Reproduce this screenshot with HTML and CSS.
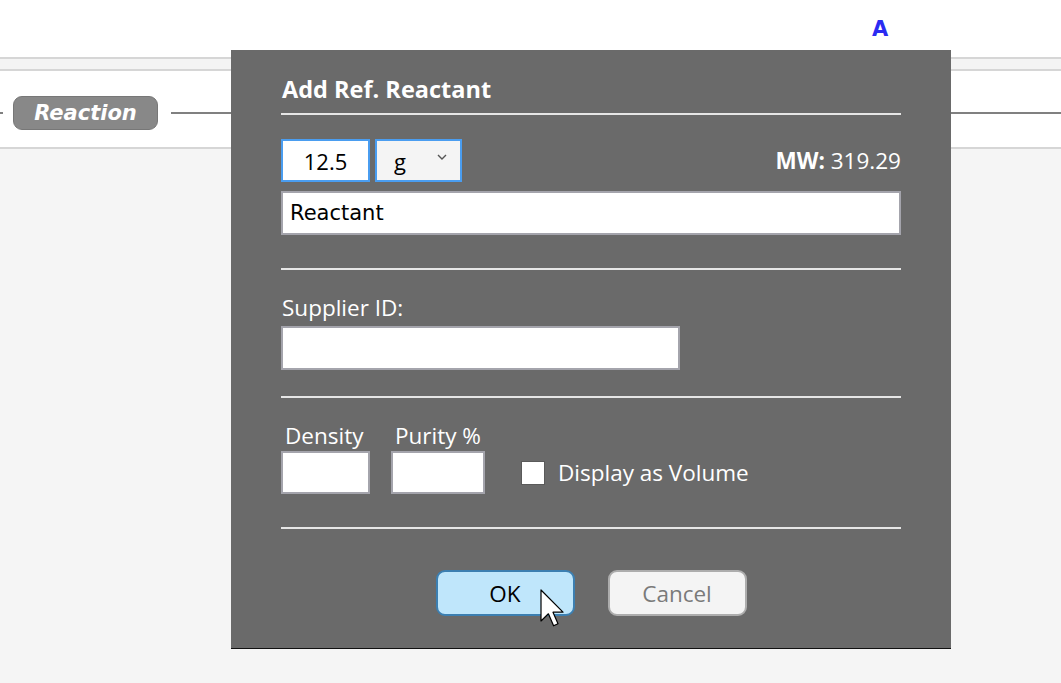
FILE: index.html
```html
<!DOCTYPE html>
<html lang="en">
<head>
    <meta charset="UTF-8">
    <title>Add Ref. Reactant</title>
    <link rel="stylesheet" href="styles.css">
</head>
<body>

    <div class="topbar">
        <span class="mark">A</span>
    </div>
    <div class="band"></div>
    <div class="flow">
        <span class="stub"></span>
        <span class="pill">Reaction</span>
        <span class="wire"></span>
    </div>
    <div class="rest"></div>

    <div class="dialog">
        <h2 class="title">Add Ref. Reactant</h2>
        <hr class="rule rule-title">

        <div class="amount-row">
            <input class="field amount" type="text" value="12.5">
            <div class="unit-wrap">
                <select class="field unit">
                    <option>g</option>
                    <option>mg</option>
                    <option>kg</option>
                </select>
                <svg class="chevron" width="10" height="6" viewBox="0 0 10 6">
                    <path d="M1 1 L5 5 L9 1" fill="none" stroke="#555" stroke-width="1.4"/>
                </svg>
            </div>
            <div class="mw"><b>MW:</b> 319.29</div>
        </div>
        <input class="field name" type="text" value="Reactant">

        <hr class="rule rule-name">

        <label class="label supplier-label">Supplier ID:</label>
        <input class="field supplier" type="text">

        <hr class="rule rule-supplier">

        <div class="props-row">
            <div class="prop">
                <label class="label prop-label">Density</label>
                <input class="field density" type="text">
            </div>
            <div class="prop">
                <label class="label prop-label">Purity %</label>
                <input class="field purity" type="text">
            </div>
            <label class="check">
                <span class="box"></span>
                Display as Volume
            </label>
        </div>

        <hr class="rule rule-props">

        <div class="buttons">
            <button class="btn btn-ok">OK</button>
            <button class="btn btn-cancel">Cancel</button>
        </div>

        <svg class="cursor" width="26" height="38" viewBox="0 0 13 19">
            <path d="M0.5 0.5 L0.5 16 L4.2 12.4 L6.8 18.4 L9 17.4 L6.5 11.6 L11.5 11.6 Z" fill="#fff" stroke="#000" stroke-width="0.6" stroke-linejoin="round"/>
        </svg>
    </div>

</body>
</html>
```

FILE: styles.css
```css
body {
    margin: 0;
    padding: 0;
    font-family: "Open Sans", "Noto Sans", sans-serif;
    background-color: #f5f5f5;
    height: 683px;
    overflow: hidden;
}

.topbar {
    height: 57px;
    background-color: #fff;
    padding-left: 872px;
    box-sizing: border-box;
    padding-top: 17px;
}

.mark {
    font-family: "DejaVu Sans", sans-serif;
    font-weight: bold;
    font-size: 21px;
    color: #2b2bf2;
}

.band {
    height: 10px;
    background-color: #f4f4f4;
    border-top: 2px solid #d6d6d6;
    border-bottom: 2px solid #d6d6d6;
}

.flow {
    height: 78px;
    box-sizing: border-box;
    padding-top: 7px;
    background-color: #fff;
    border-bottom: 2px solid #d6d6d6;
    display: flex;
    align-items: center;
}

.stub {
    width: 3px;
    height: 2px;
    background-color: #808080;
    margin-right: 10px;
}

.pill {
    width: 143px;
    height: 32px;
    line-height: 32px;
    text-align: center;
    background-color: #888;
    border: 1px solid #777;
    border-radius: 9px;
    color: #fff;
    font-family: "DejaVu Sans", sans-serif;
    font-style: italic;
    font-weight: bold;
    font-size: 21px;
    margin-right: 13px;
}

.wire {
    flex: 1;
    height: 2px;
    background-color: #808080;
}

.rest {
    background-color: #f5f5f5;
}

/* Dialog */
.dialog {
    position: absolute;
    left: 231px;
    top: 50px;
    width: 720px;
    height: 599px;
    box-sizing: border-box;
    padding: 24px 50px 0 50px;
    background-color: #6a6a6a;
    border-bottom: 1px solid #111;
    color: #fff;
}

.title {
    margin: 0;
    height: 30px;
    line-height: 30px;
    font-size: 23.5px;
    font-weight: bold;
    padding-left: 1px;
}

.rule {
    border: none;
    height: 2px;
    margin: 0;
    background-color: #e6e6e6;
}

.rule-title { margin-top: 9px; }
.rule-name { margin-top: 33px; }
.rule-supplier { margin-top: 26px; }
.rule-props { margin-top: 33px; }

.field {
    box-sizing: border-box;
    margin: 0;
    background-color: #fff;
    border: 2px solid #a4a4ac;
    font-family: "Open Sans", "Noto Sans", sans-serif;
    font-size: 22px;
    color: #000;
    outline: none;
}

.amount-row {
    display: flex;
    align-items: center;
    margin-top: 24px;
    height: 43px;
}

.amount {
    width: 89px;
    height: 43px;
    text-align: center;
    border-color: #4a9df0;
    padding: 0;
}

.unit-wrap {
    position: relative;
    margin-left: 5px;
}

.unit {
    width: 87px;
    height: 43px;
    border-color: #4a9df0;
    background-color: #f4f4f4;
    appearance: none;
    -webkit-appearance: none;
    padding: 0 0 0 17px;
    border-radius: 0;
}

.chevron {
    position: absolute;
    left: 62px;
    top: 15px;
}

.mw {
    margin-left: auto;
    font-size: 22.5px;
    margin-top: -1px;
}

.name {
    display: block;
    width: 620px;
    height: 44px;
    margin-top: 9px;
    padding: 0 7px;
    font-family: "DejaVu Sans", sans-serif;
    font-size: 21px;
}

.label {
    display: block;
    font-size: 22.5px;
    line-height: 26px;
}

.supplier-label {
    margin-top: 25px;
    padding-left: 1px;
}

.supplier {
    display: block;
    width: 399px;
    height: 44px;
    margin-top: 5px;
}

.props-row {
    display: flex;
    align-items: flex-end;
    margin-top: 25px;
}

.prop + .prop {
    margin-left: 21px;
}

.prop-label {
    padding-left: 4px;
    margin-bottom: 2px;
}

.density {
    display: block;
    width: 89px;
    height: 43px;
}

.purity {
    display: block;
    width: 94px;
    height: 43px;
}

.check {
    display: flex;
    align-items: center;
    height: 43px;
    margin-left: 36px;
    font-size: 22.5px;
}

.box {
    width: 24px;
    height: 24px;
    box-sizing: border-box;
    background-color: #fff;
    border: 1px solid #5a5a5a;
    margin-right: 13px;
}

.buttons {
    display: flex;
    justify-content: center;
    gap: 33px;
    margin-top: 41px;
}

.btn {
    width: 139px;
    height: 46px;
    box-sizing: border-box;
    border-radius: 9px;
    font-family: "Open Sans", "Noto Sans", sans-serif;
    font-size: 22.5px;
    cursor: pointer;
}

.btn-ok {
    background-color: #bfe6fb;
    border: 2px solid #3c7fb1;
    color: #000;
}

.btn-cancel {
    background-color: #f4f4f4;
    border: 2px solid #adadad;
    color: #7a7a7a;
}

.cursor {
    position: absolute;
    left: 309px;
    top: 539px;
}
```
